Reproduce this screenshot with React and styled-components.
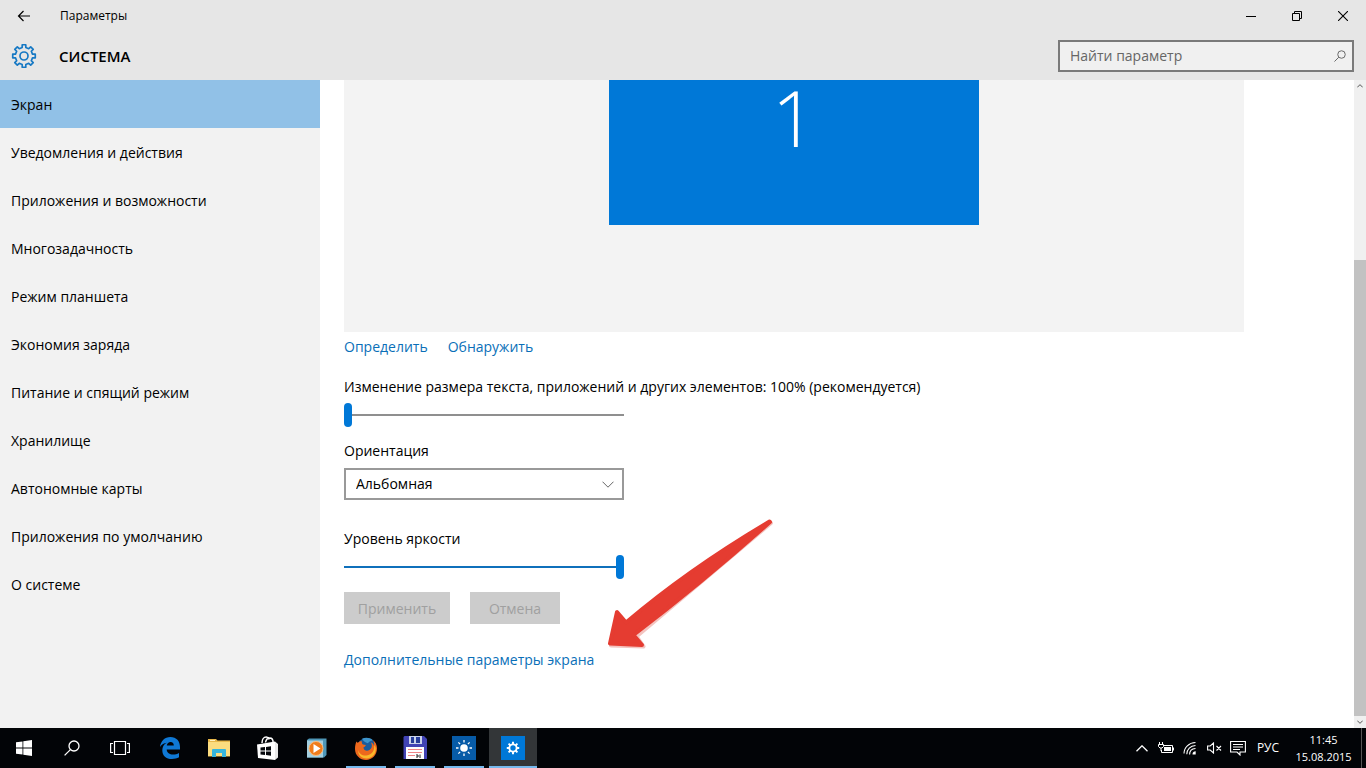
import React from "react";
import styled, { createGlobalStyle } from "styled-components";

const Global = createGlobalStyle`
  * { box-sizing: border-box; }
  html, body { margin: 0; }
  body, button, input, select {
    font-family: "Open Sans", "Noto Sans", "Liberation Sans", sans-serif;
    font-size: 14px;
    line-height: 20px;
    color: #000;
  }
  button { border: 0; padding: 0; background: transparent; }
  svg { display: block; }
`;

const Desktop = styled.div`
  display: flex;
  flex-direction: column;
  min-height: 100vh;
  background: #fff;
`;
const Header = styled.header`
  flex: none;
  background: #e6e6e6;
`;
const TitleBar = styled.div`
  display: flex;
  align-items: center;
  height: 32px;
`;
const BackButton = styled.button`
  display: grid;
  place-items: center;
  width: 48px;
  height: 32px;
`;
const WindowTitle = styled.span`
  flex: 1;
  padding-left: 12px;
  font-size: 12px;
`;
const WindowButton = styled.button`
  display: grid;
  place-items: center;
  width: 46px;
  height: 32px;
`;
const SectionBar = styled.div`
  display: flex;
  align-items: center;
  height: 48px;
  padding: 0 12px 0 11px;
`;
const SectionTitle = styled.h1`
  flex: 1;
  margin: 0;
  padding-left: 22px;
  font-size: 15px;
  line-height: 20px;
  font-weight: 600;
`;
const SearchBox = styled.label`
  display: flex;
  align-items: center;
  width: 296px;
  height: 32px;
  padding: 0 6px 0 10px;
  border: 2px solid #7a7a7a;
  background: #f0f0f0;
`;
const SearchInput = styled.input`
  flex: 1;
  min-width: 0;
  padding: 0;
  border: 0;
  outline: 0;
  background: transparent;
  &::placeholder { color: #666; opacity: 1; }
`;

const Body = styled.div`
  display: flex;
  flex: 1;
`;
const Sidebar = styled.nav`
  flex: none;
  width: 320px;
  background: #f2f2f2;
`;
const NavItem = styled.a`
  display: flex;
  align-items: center;
  height: 48px;
  padding: 2px 0 0 11px;
  color: #000;
  text-decoration: none;
  background: ${(p) => (p.$active ? "#91c1e7" : "transparent")};
`;
const Content = styled.main`
  position: relative;
  flex: 1;
  min-width: 0;
  padding: 0 24px;
`;
const Preview = styled.div`
  display: flex;
  justify-content: center;
  align-items: flex-start;
  max-width: 900px;
  height: 252px;
  background: #f3f3f3;
`;
const Monitor = styled.button`
  width: 370px;
  height: 145px;
  padding-bottom: 70px;
  background: #0078d7;
  color: #fff;
  font-size: 78px;
  line-height: 75px;
  font-weight: 300;
`;
const LinkRow = styled.div`
  display: flex;
  gap: 20px;
  margin-top: ${(p) => p.$top}px;
`;
const TextLink = styled.a`
  color: #0a6fb8;
  text-decoration: none;
`;
const FieldLabel = styled.label`
  display: block;
  margin-top: ${(p) => p.$top}px;
`;
const Slider = styled.input`
  display: block;
  appearance: none;
  width: 280px;
  height: 24px;
  margin: 6px 0 0;
  background: linear-gradient(${(p) => p.$track}, ${(p) => p.$track}) center / 100% 2px no-repeat;
  &::-webkit-slider-thumb {
    appearance: none;
    width: 8px;
    height: 24px;
    border-radius: 4px;
    background: #0078d7;
  }
`;
const SelectWrap = styled.div`
  display: grid;
  align-items: center;
  width: 280px;
  margin-top: 7px;
  & > * { grid-area: 1 / 1; }
  & > svg { justify-self: end; margin-right: 10px; pointer-events: none; }
`;
const Select = styled.select`
  appearance: none;
  width: 100%;
  height: 32px;
  padding: 0 10px;
  border: 2px solid #999;
  border-radius: 0;
  background: #fff;
`;
const ButtonRow = styled.div`
  display: flex;
  gap: 20px;
  margin-top: 13px;
`;
const ActionButton = styled.button`
  width: ${(p) => p.$width}px;
  height: 32px;
  padding-top: 2px;
  background: #ccc;
  color: #a0a0a0;
`;
const Pointer = styled.svg`
  position: absolute;
  left: 284px;
  top: 434px;
  pointer-events: none;
`;
const ScrollBar = styled.div`
  display: flex;
  flex-direction: column;
  flex: none;
  width: 12px;
  background: #f0f0f0;
`;
const ScrollArrow = styled.button`
  display: grid;
  place-items: center;
  height: 12px;
`;
const ScrollGap = styled.div`
  flex: 7;
`;
const ScrollThumb = styled.div`
  flex: 19;
  background: #c2c2c2;
`;

const Taskbar = styled.footer`
  display: flex;
  flex: none;
  height: 40px;
  background: #020407;
  color: #fff;
`;
const SystemButtons = styled.div`
  display: flex;
  margin-right: 2px;
`;
const TaskButton = styled.button`
  display: grid;
  place-items: center;
  width: 48px;
  height: 40px;
`;
const Apps = styled.div`
  display: flex;
  flex: 1;
  gap: 1px;
`;
const AppButton = styled(TaskButton)`
  background: ${(p) =>
    p.$state === "active"
      ? "linear-gradient(#76b9ed, #76b9ed) center bottom / 48px 2px no-repeat #333638"
      : p.$state === "open"
      ? "linear-gradient(#76b9ed, #76b9ed) center bottom / 40px 2px no-repeat"
      : "transparent"};
`;
const Tray = styled.div`
  display: flex;
  align-items: center;
`;
const TrayButton = styled.button`
  display: grid;
  place-items: center;
  width: 24px;
  height: 40px;
`;
const Language = styled.button`
  width: 36px;
  height: 40px;
  color: #fff;
  font-size: 12px;
`;
const Clock = styled.button`
  width: 75px;
  height: 40px;
  color: #fff;
  font-size: 11px;
  line-height: 17px;
`;
const ShowDesktop = styled.button`
  width: 5px;
  height: 40px;
  border-left: 1px solid #555;
`;

const gearPath = (cx, cy, teeth, outer, inner) => {
  const step = (Math.PI * 2) / teeth;
  const at = (r, a) => `${(cx + r * Math.cos(a)).toFixed(2)} ${(cy + r * Math.sin(a)).toFixed(2)}`;
  let points = [];
  for (let i = 0; i < teeth; i++) {
    const a = i * step - Math.PI / 2;
    points.push(at(inner, a - step * 0.27), at(outer, a - step * 0.2), at(outer, a + step * 0.2), at(inner, a + step * 0.27));
  }
  return `M${points.join("L")}Z`;
};

const SystemGear = () => (
  <svg width="26" height="26" viewBox="0 0 26 26" fill="none" stroke="#1779c4" strokeWidth="1.7" strokeLinejoin="round">
    <path d={gearPath(13, 13, 8, 11.4, 8.7)} />
    <circle cx="13" cy="13" r="4" />
  </svg>
);

const Magnifier = ({ size, color, width }) => (
  <svg width={size} height={size} viewBox="0 0 16 16" fill="none" stroke={color} strokeWidth={width}>
    <circle cx="10" cy="6" r="5" />
    <path d="M6.4 9.6 0.6 15.4" />
  </svg>
);

const Chevron = ({ width, color, up, stroke = 1.3 }) => (
  <svg width={width} height={width / 2 + 1} viewBox="0 0 12 7" fill="none" stroke={color} strokeWidth={stroke}>
    <path d={up ? "M.5 6.3 6 .8l5.5 5.5" : "M.5.7 6 6.2l5.5-5.5"} />
  </svg>
);

const WindowsLogo = () => (
  <svg width="16" height="16" viewBox="0 0 16 16" fill="#fff">
    <path d="M0 2.3 6.5 1.4V7.6H0ZM7.3 1.3 16 0v7.6H7.3ZM0 8.4h6.5v6.2L0 13.7ZM7.3 8.4H16V16l-8.7-1.3Z" />
  </svg>
);

const TaskViewIcon = () => (
  <svg width="20" height="16" viewBox="0 0 20 16" fill="none" stroke="#fff" strokeWidth="1.2">
    <path d="M4.5 1.5h11v13h-11ZM3 3.500H.6v9H3M17 3.500h2.400v9H17" />
  </svg>
);

const EdgeIcon = () => (
  <svg width="20" height="22" viewBox="0 0 20 22">
    <path
      fill="#0f78d4"
      d="M0 10C.7 4 4.7 0 10.4 0 16.5 0 20 4.300 20 10v2.600H6.700c.2 3.400 3 5 6.300 5 2.300 0 4.200-.6 6-1.700v4.400c-2 1.100-4.300 1.700-7 1.700-5.900 0-9.700-3.400-9.700-8.800 0-3.200 1.500-6 4.500-7.500C4 6.300 1.700 7.300 0 10Zm6.800-1.400h7C13.800 6.200 12.700 5 10.600 5 8.600 5 7.200 6.400 6.800 8.600Z"
    />
  </svg>
);

const ExplorerIcon = () => (
  <svg width="22" height="20" viewBox="0 0 22 20">
    <path d="M0 1h8l1.500 1.500H22v16H0Z" fill="#e8b84b" />
    <path d="M2 2h5v1H2Z" fill="#fff2bf" />
    <path d="M0 4h22v14H0Z" fill="#fbdc7f" />
    <path d="M4 19v-7q0-1 1-1h12q1 0 1 1v7h-4v-4H8v4Z" fill="#35b5dc" />
  </svg>
);

const StoreIcon = () => (
  <svg width="22" height="24" viewBox="0 0 22 24">
    <path d="M5 7C5 3.200 6.800 1 9.200 1c1.600 0 2.800 1 3.400 2.300M8.500 6.500C9 3.500 10.800 2 12.800 2c2.200 0 3.300 2 3.300 4.500" fill="none" stroke="#fff" strokeWidth="1.5" />
    <path d="m0 8.500 18-3V24L1 22Z" fill="#fff" />
    <path d="m18 5.500 3 2.500v13.500L18 24Z" fill="#e9e9e9" />
    <path d="m3.500 11.600 4.500-.6v3.500H3.500ZM9 10.900l5-.7v4.300H9ZM3.500 15.500H8V19l-4.500-.5ZM9 15.500h5v4.200l-5-.6Z" fill="#05080c" />
  </svg>
);

const MediaIcon = () => (
  <svg width="22" height="20" viewBox="0 0 22 20">
    <path d="m1 2 2-1.500h17.500v16.500L18 19.500H1Z" fill="#4f97b8" />
    <path d="M1 2.500h16v17H1Z" fill="#a4cfdf" />
    <circle cx="10" cy="10.500" r="7" fill="#ef7c1b" stroke="#f9ba7c" />
    <path d="m7.500 6 7 4.500-7 4.500Z" fill="#fff" />
  </svg>
);

const FirefoxIcon = () => (
  <svg width="22" height="23" viewBox="0 0 22 23">
    <circle cx="11.5" cy="10.5" r="9.5" fill="#1b5c9d" />
    <path d="M7 1.800c3-1.600 8-1.400 11 1.400-2 .5-4 1-5 3-2-.5-4-1-6-4.400Z" fill="#3e95cc" />
    <path d="M1.500 4.500c.6.4 1 .9 1.300 1.600C4 4.500 5.500 4 7 4.500c-.5 1 0 2.300 1 3l2.600.4c.4.6-.2 1.500-2.200 2.500.5 3.300 3.600 4 6 2.600 2.800-1.500 3-5 1.600-7.500 2 .5 2.800 2 3 3.500.5-2.300-.2-4.600-1.500-6.200C20.500 4.800 22 8 22 11.500 22 18 17 23 11 23S0 18.300 0 12c0-3 .6-5.600 1.500-7.500Z" fill="#ed681c" />
    <path d="M19 8c1 5-2 10-7.500 10.500C7.500 19 4 16.500 3 13c0 5 4 8.500 8.500 8.500C17.500 21.500 22 16 20.500 10Z" fill="#f9b82b" />
  </svg>
);

const FloppyIcon = () => (
  <svg width="24" height="24" viewBox="0 0 24 24">
    <path d="M1.500 0H21l3 3v20H.5V1Z" fill="#4143b4" />
    <path d="M6 0h13v8H6Z" fill="#c9d2ea" />
    <path d="M8 1h3v6H8ZM13 1h4v6h-4Z" fill="#263c98" />
    <path d="M3 11h18v12H3Z" fill="#fff" />
    <path d="M5 13.500h14M5 16.500h14M5 19.500h7" stroke="#ef8587" />
    <path d="M13 19h2v2h-2M17 18.500V22" fill="none" stroke="#222" />
  </svg>
);

const BrightnessIcon = () => (
  <svg width="24" height="24" viewBox="0 0 24 24">
    <path d="M0 0h24v24H0Z" fill="#075ba7" />
    <circle cx="12" cy="12" r="3.8" fill="#fff" />
    <g stroke="#fff" strokeWidth="1.3">
      <path d="M12 4v2.500M12 17.500V20M4 12h2.500M17.500 12H20M6.400 6.400l1.700 1.700M15.900 15.900l1.700 1.700M17.600 6.400l-1.700 1.700M8.100 15.900l-1.700 1.700" />
    </g>
  </svg>
);

const SettingsTile = () => (
  <svg width="24" height="24" viewBox="0 0 24 24">
    <path d="M0 0h24v24H0Z" fill="#0078d7" />
    <path d={gearPath(12, 12, 8, 6.3, 4.6)} fill="#fff" />
    <circle cx="12" cy="12" r="2.7" fill="#0078d7" />
  </svg>
);

const BatteryIcon = () => (
  <svg width="16" height="14" viewBox="0 0 16 14" fill="none" stroke="#fff">
    <path d="M6 4.500h8.500v7h-11V9M15.500 6.500v3M1.500 1v2M4.500 1v2M.5 3.500h5v2L4 7H2L.5 5.500ZM3 7v3" />
    <path d="M6 6h7v4H6Z" fill="#fff" stroke="none" />
  </svg>
);

const WifiIcon = () => (
  <svg width="14" height="14" viewBox="0 0 14 14" fill="none" stroke="#fff" strokeWidth="1.1">
    <path d="M1 12.500C1 6.500 6 1.600 12.500 1.500M3.800 13.200C3.800 8.300 7.500 4.700 12.500 4.500M6.600 13.500C6.600 9.800 9 7.700 12.500 7.500" />
    <path d="M9.500 13.500c0-2 1.200-3.200 3.200-3.200v3.200Z" fill="#fff" stroke="none" />
  </svg>
);

const MutedIcon = () => (
  <svg width="15" height="12" viewBox="0 0 15 12" fill="none" stroke="#fff" strokeWidth="1.1">
    <path d="M.6 4h2.600L6.500 1v10L3.200 8H.6ZM9.500 4l4.500 4.500M14 4 9.500 8.500" />
  </svg>
);

const NotificationIcon = () => (
  <svg width="16" height="16" viewBox="0 0 16 16" fill="none" stroke="#fff" strokeWidth="1.1">
    <path d="M.6 1.500h14.800v10.500H10v3L7 12H.6ZM3 4.500h10M3 7h10M3 9.500h7" />
  </svg>
);

const sections = [
  "Экран",
  "Уведомления и действия",
  "Приложения и возможности",
  "Многозадачность",
  "Режим планшета",
  "Экономия заряда",
  "Питание и спящий режим",
  "Хранилище",
  "Автономные карты",
  "Приложения по умолчанию",
  "О системе",
];

const apps = [
  { name: "Edge", Icon: EdgeIcon },
  { name: "Проводник", Icon: ExplorerIcon },
  { name: "Магазин", Icon: StoreIcon },
  { name: "Медиаплеер", Icon: MediaIcon },
  { name: "Firefox", Icon: FirefoxIcon, state: "open" },
  { name: "Файлы", Icon: FloppyIcon, state: "open" },
  { name: "Яркость", Icon: BrightnessIcon, state: "open" },
  { name: "Параметры", Icon: SettingsTile, state: "active" },
];

export default function App() {
  return (
    <Desktop>
      <Global />
      <Header>
        <TitleBar>
          <BackButton aria-label="Назад">
            <svg width="14" height="12" viewBox="0 0 14 12" fill="none" stroke="#000" strokeWidth="1.2">
              <path d="M13 6H1.500M6.500 1l-5 5 5 5" />
            </svg>
          </BackButton>
          <WindowTitle>Параметры</WindowTitle>
          <WindowButton aria-label="Свернуть">
            <svg width="10" height="10" viewBox="0 0 10 10" stroke="#000"><path d="M0 5.500h10" /></svg>
          </WindowButton>
          <WindowButton aria-label="Восстановить">
            <svg width="10" height="10" viewBox="0 0 10 10" fill="none" stroke="#000"><path d="M.5 2.500h7v7h-7ZM2.500 2V.5h7v7H8" /></svg>
          </WindowButton>
          <WindowButton aria-label="Закрыть">
            <svg width="10" height="10" viewBox="0 0 10 10" stroke="#000" strokeWidth="1.1"><path d="m0 0 10 10M10 0 0 10" /></svg>
          </WindowButton>
        </TitleBar>
        <SectionBar>
          <SystemGear />
          <SectionTitle>СИСТЕМА</SectionTitle>
          <SearchBox>
            <SearchInput type="text" placeholder="Найти параметр" aria-label="Найти параметр" />
            <Magnifier size={12} color="#666" width={1.3} />
          </SearchBox>
        </SectionBar>
      </Header>

      <Body>
        <Sidebar>
          {sections.map((name, i) => (
            <NavItem key={name} href="#" $active={i === 0}>{name}</NavItem>
          ))}
        </Sidebar>
        <Content>
          <Preview>
            <Monitor>1</Monitor>
          </Preview>
          <LinkRow $top={5}>
            <TextLink href="#">Определить</TextLink>
            <TextLink href="#">Обнаружить</TextLink>
          </LinkRow>
          <FieldLabel htmlFor="scale" $top={20}>
            Изменение размера текста, приложений и других элементов: 100% (рекомендуется)
          </FieldLabel>
          <Slider id="scale" type="range" min="0" max="100" defaultValue="0" $track="#8f8f8f" />
          <FieldLabel htmlFor="orientation" $top={14}>Ориентация</FieldLabel>
          <SelectWrap>
            <Select id="orientation"><option>Альбомная</option></Select>
            <Chevron width={12} color="#666" stroke={1} />
          </SelectWrap>
          <FieldLabel htmlFor="brightness" $top={29}>Уровень яркости</FieldLabel>
          <Slider id="brightness" type="range" min="0" max="100" defaultValue="100" $track="#0f70bb" />
          <ButtonRow>
            <ActionButton disabled $width={106}>Применить</ActionButton>
            <ActionButton disabled $width={90}>Отмена</ActionButton>
          </ButtonRow>
          <LinkRow $top={26}>
            <TextLink href="#">Дополнительные параметры экрана</TextLink>
          </LinkRow>
          <Pointer width="176" height="140" viewBox="0 0 176 140">
            <g strokeWidth="4" strokeLinejoin="round" strokeLinecap="round">
              <path d="M167 9 32.500 122.500 39.500 132.500 7 131.500" fill="none" stroke="#f3c4c0" />
              <path d="M165.500 7.500Q85 55 22 108.500L13 98 6 129.500 38 131 29.500 121Q100 67 166 8Z" fill="#e53c31" stroke="#e53c31" />
            </g>
          </Pointer>
        </Content>
        <ScrollBar>
          <ScrollArrow aria-label="Вверх"><Chevron width={6} color="#555" stroke={2} up /></ScrollArrow>
          <ScrollGap />
          <ScrollThumb />
          <ScrollArrow aria-label="Вниз"><Chevron width={6} color="#555" stroke={2} /></ScrollArrow>
        </ScrollBar>
      </Body>

      <Taskbar>
        <SystemButtons>
          <TaskButton aria-label="Пуск"><WindowsLogo /></TaskButton>
          <TaskButton aria-label="Поиск"><Magnifier size={16} color="#fff" width={1.3} /></TaskButton>
          <TaskButton aria-label="Представление задач"><TaskViewIcon /></TaskButton>
        </SystemButtons>
        <Apps>
          {apps.map(({ name, Icon, state }) => (
            <AppButton key={name} aria-label={name} $state={state}><Icon /></AppButton>
          ))}
        </Apps>
        <Tray>
          <TrayButton aria-label="Скрытые значки"><Chevron width={12} color="#fff" up /></TrayButton>
          <TrayButton aria-label="Батарея"><BatteryIcon /></TrayButton>
          <TrayButton aria-label="Сеть"><WifiIcon /></TrayButton>
          <TrayButton aria-label="Звук"><MutedIcon /></TrayButton>
          <TrayButton aria-label="Уведомления"><NotificationIcon /></TrayButton>
          <Language>РУС</Language>
          <Clock>11:45<br />15.08.2015</Clock>
          <ShowDesktop aria-label="Показать рабочий стол" />
        </Tray>
      </Taskbar>
    </Desktop>
  );
}
